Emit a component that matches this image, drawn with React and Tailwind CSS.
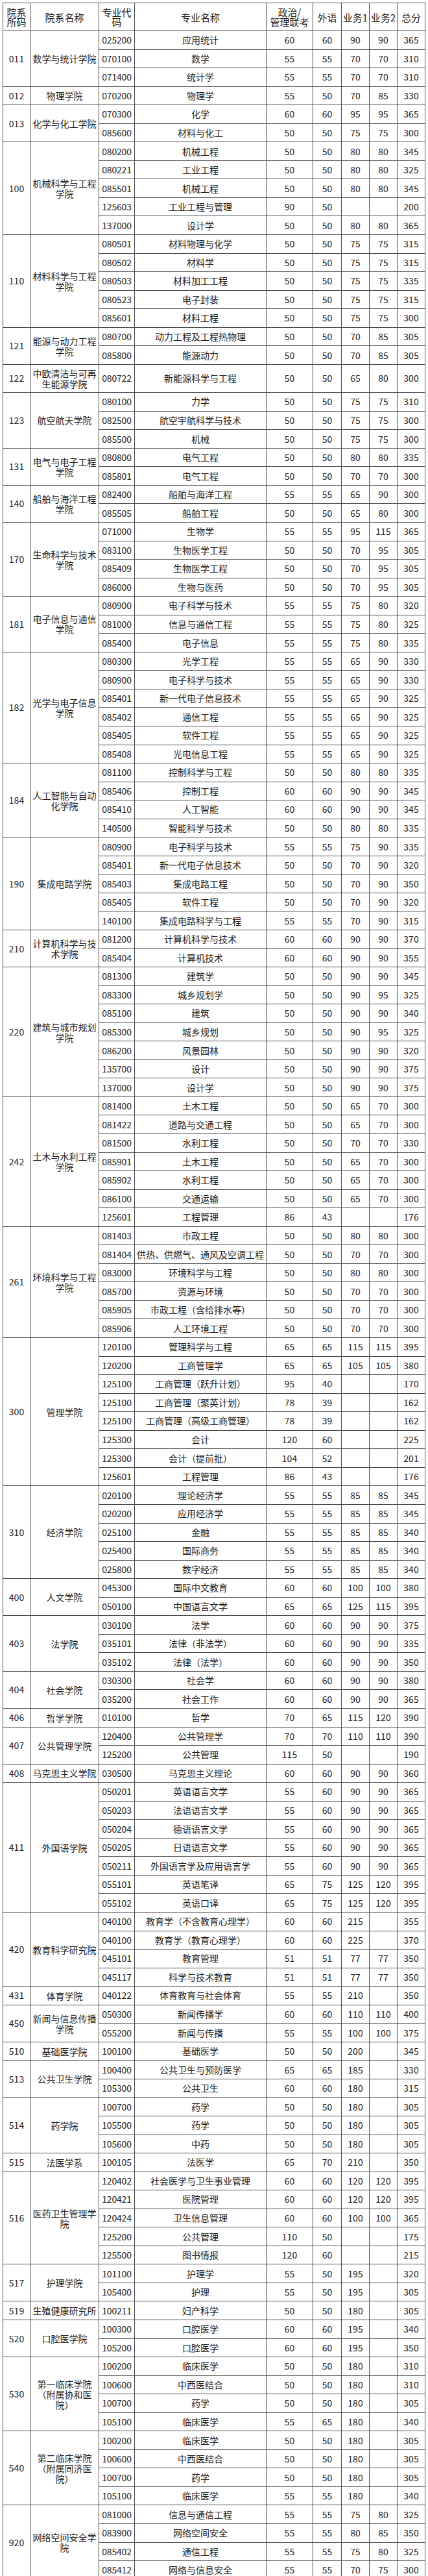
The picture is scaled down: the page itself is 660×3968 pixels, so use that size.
const GROUPS = [
  ['011', '数学与统计学院', [
    '025200|应用统计|60|60|90|90|365',
    '070100|数学|55|55|70|70|310',
    '071400|统计学|55|55|70|70|310',
  ]],
  ['012', '物理学院', [
    '070200|物理学|55|50|70|85|330',
  ]],
  ['013', '化学与化工学院', [
    '070300|化学|60|60|95|95|365',
    '085600|材料与化工|50|50|75|75|300',
  ]],
  ['100', '机械科学与工程学院', [
    '080200|机械工程|50|50|80|80|345',
    '080221|工业工程|50|50|80|80|325',
    '085501|机械工程|50|50|80|80|345',
    '125603|工业工程与管理|90|50|||200',
    '137000|设计学|50|50|80|80|365',
  ]],
  ['110', '材料科学与工程学院', [
    '080501|材料物理与化学|50|50|75|75|315',
    '080502|材料学|50|50|75|75|315',
    '080503|材料加工工程|50|50|75|75|335',
    '080523|电子封装|50|50|75|75|315',
    '085601|材料工程|50|50|75|75|300',
  ]],
  ['121', '能源与动力工程学院', [
    '080700|动力工程及工程热物理|50|50|70|85|305',
    '085800|能源动力|50|50|70|85|305',
  ]],
  ['122', '中欧清洁与可再生能源学院', [
    '080722|新能源科学与工程|50|50|65|80|300',
  ], true],
  ['123', '航空航天学院', [
    '080100|力学|50|50|75|75|310',
    '082500|航空宇航科学与技术|50|50|75|75|300',
    '085500|机械|50|50|75|75|300',
  ]],
  ['131', '电气与电子工程学院', [
    '080800|电气工程|50|50|80|80|335',
    '085801|电气工程|50|50|70|70|300',
  ]],
  ['140', '船舶与海洋工程学院', [
    '082400|船舶与海洋工程|55|55|65|90|300',
    '085505|船舶工程|50|50|65|80|300',
  ]],
  ['170', '生命科学与技术学院', [
    '071000|生物学|55|55|95|115|365',
    '083100|生物医学工程|50|50|70|95|305',
    '085409|生物医学工程|50|50|70|95|305',
    '086000|生物与医药|50|50|70|95|305',
  ]],
  ['181', '电子信息与通信学院', [
    '080900|电子科学与技术|55|55|75|80|320',
    '081000|信息与通信工程|55|55|75|80|325',
    '085400|电子信息|55|55|75|80|335',
  ]],
  ['182', '光学与电子信息学院', [
    '080300|光学工程|55|55|65|90|330',
    '080900|电子科学与技术|55|55|65|90|330',
    '085401|新一代电子信息技术|55|55|65|90|325',
    '085402|通信工程|55|55|65|90|325',
    '085405|软件工程|55|55|65|90|325',
    '085408|光电信息工程|55|55|65|90|325',
  ]],
  ['184', '人工智能与自动化学院', [
    '081100|控制科学与工程|50|50|80|80|335',
    '085406|控制工程|60|60|90|90|345',
    '085410|人工智能|60|60|90|90|345',
    '140500|智能科学与技术|50|50|80|80|335',
  ]],
  ['190', '集成电路学院', [
    '080900|电子科学与技术|55|55|75|90|335',
    '085401|新一代电子信息技术|50|50|70|90|320',
    '085403|集成电路工程|50|50|70|90|350',
    '085405|软件工程|50|50|70|90|320',
    '140100|集成电路科学与工程|55|55|70|90|315',
  ]],
  ['210', '计算机科学与技术学院', [
    '081200|计算机科学与技术|60|60|90|90|370',
    '085404|计算机技术|60|60|90|90|355',
  ]],
  ['220', '建筑与城市规划学院', [
    '081300|建筑学|50|50|90|90|345',
    '083300|城乡规划学|50|50|90|95|325',
    '085100|建筑|50|50|90|90|340',
    '085300|城乡规划|50|50|90|95|325',
    '086200|风景园林|50|50|90|90|320',
    '135700|设计|50|50|90|90|375',
    '137000|设计学|50|50|90|90|375',
  ]],
  ['242', '土木与水利工程学院', [
    '081400|土木工程|50|50|65|70|300',
    '081422|道路与交通工程|50|50|65|70|300',
    '081500|水利工程|50|50|70|70|330',
    '085901|土木工程|50|50|65|70|300',
    '085902|水利工程|50|50|65|70|300',
    '086100|交通运输|50|50|65|70|300',
    '125601|工程管理|86|43|||176',
  ]],
  ['261', '环境科学与工程学院', [
    '081403|市政工程|50|50|80|80|300',
    '081404|供热、供燃气、通风及空调工程|50|50|70|70|300',
    '083000|环境科学与工程|50|50|80|80|300',
    '085700|资源与环境|50|50|70|70|300',
    '085905|市政工程（含给排水等）|50|50|70|70|300',
    '085906|人工环境工程|50|50|70|70|300',
  ]],
  ['300', '管理学院', [
    '120100|管理科学与工程|65|65|115|115|395',
    '120200|工商管理学|65|65|105|105|380',
    '125100|工商管理（跃升计划）|95|40|||170',
    '125100|工商管理（聚英计划）|78|39|||162',
    '125100|工商管理（高级工商管理）|78|39|||162',
    '125300|会计|120|60|||225',
    '125300|会计（提前批）|104|52|||201',
    '125601|工程管理|86|43|||176',
  ]],
  ['310', '经济学院', [
    '020100|理论经济学|55|55|85|85|345',
    '020200|应用经济学|55|55|85|85|345',
    '025100|金融|55|55|85|85|340',
    '025400|国际商务|55|55|85|85|340',
    '025800|数字经济|55|55|85|85|340',
  ]],
  ['400', '人文学院', [
    '045300|国际中文教育|60|60|100|100|380',
    '050100|中国语言文学|65|65|125|115|395',
  ]],
  ['403', '法学院', [
    '030100|法学|60|60|90|90|375',
    '035101|法律（非法学）|60|60|90|90|335',
    '035102|法律（法学）|60|60|90|90|350',
  ]],
  ['404', '社会学院', [
    '030300|社会学|60|60|90|90|380',
    '035200|社会工作|60|60|90|90|365',
  ]],
  ['406', '哲学学院', [
    '010100|哲学|70|65|115|120|390',
  ]],
  ['407', '公共管理学院', [
    '120400|公共管理学|70|70|110|110|390',
    '125200|公共管理|115|50|||190',
  ]],
  ['408', '马克思主义学院', [
    '030500|马克思主义理论|60|60|90|90|360',
  ]],
  ['411', '外国语学院', [
    '050201|英语语言文学|55|60|90|90|365',
    '050203|法语语言文学|55|60|90|90|365',
    '050204|德语语言文学|55|60|90|90|365',
    '050205|日语语言文学|55|60|90|90|365',
    '050211|外国语言学及应用语言学|55|60|90|90|365',
    '055101|英语笔译|65|75|125|120|395',
    '055102|英语口译|65|75|125|120|395',
  ]],
  ['420', '教育科学研究院', [
    '040100|教育学（不含教育心理学）|60|60|215||355',
    '040100|教育学（教育心理学）|60|60|225||370',
    '045101|教育管理|51|51|77|77|350',
    '045117|科学与技术教育|51|51|77|77|350',
  ]],
  ['431', '体育学院', [
    '040122|体育教育与社会体育|55|55|210||350',
  ]],
  ['450', '新闻与信息传播学院', [
    '050300|新闻传播学|60|60|110|110|400',
    '055200|新闻与传播|55|55|100|100|375',
  ]],
  ['510', '基础医学院', [
    '100100|基础医学|50|50|200||345',
  ]],
  ['513', '公共卫生学院', [
    '100400|公共卫生与预防医学|65|65|185||330',
    '105300|公共卫生|60|60|180||315',
  ]],
  ['514', '药学院', [
    '100700|药学|50|50|180||305',
    '105500|药学|50|50|180||305',
    '105600|中药|50|50|180||305',
  ]],
  ['515', '法医学系', [
    '100105|法医学|65|70|210||350',
  ]],
  ['516', '医药卫生管理学院', [
    '120402|社会医学与卫生事业管理|60|60|120|120|395',
    '120421|医院管理|60|60|120|120|395',
    '120424|卫生信息管理|60|60|100|100|365',
    '125200|公共管理|110|50|||175',
    '125500|图书情报|120|60|||215',
  ]],
  ['517', '护理学院', [
    '101100|护理学|55|50|195||320',
    '105400|护理|55|50|195||305',
  ]],
  ['519', '生殖健康研究所', [
    '100211|妇产科学|50|50|180||305',
  ]],
  ['520', '口腔医学院', [
    '100300|口腔医学|60|60|195||340',
    '105200|口腔医学|60|60|195||350',
  ]],
  ['530', '第一临床学院（附属协和医院）', [
    '100200|临床医学|50|50|180||310',
    '100600|中西医结合|50|50|180||310',
    '100700|药学|50|50|180||305',
    '105100|临床医学|55|65|180||340',
  ]],
  ['540', '第二临床学院（附属同济医院）', [
    '100200|临床医学|50|50|180||305',
    '100600|中西医结合|50|50|180||305',
    '100700|药学|50|50|180||305',
    '105100|临床医学|55|55|180||340',
  ]],
  ['920', '网络空间安全学院', [
    '081000|信息与通信工程|55|55|75|80|325',
    '083900|网络空间安全|55|55|80|85|350',
    '085402|通信工程|55|55|75|80|325',
    '085412|网络与信息安全|55|55|70|75|300',
  ]],
]

// widths of the five score columns: 政治, 外语, 业务1, 业务2, 总分
const SCORE_W = ['w-[72px]', 'w-[44px]', 'w-[43px]', 'w-[43px]', 'w-[43px]']

const cell = 'shrink-0 border-r border-[#4a4a4a] flex items-center justify-center text-center'

function Row({ line, tall }) {
  const [code, name, ...scores] = line.split('|')
  return (
    <div className={`flex border-b border-[#4a4a4a] ${tall ? 'h-[43.3px]' : 'h-[28.55px]'}`}>
      <div className={`${cell} w-[55px] tracking-[-0.2px]`}>{code}</div>
      <div className={`${cell} w-[203px] whitespace-nowrap`}>{name}</div>
      {scores.map((s, i) => (
        <div key={i} className={`${cell} ${SCORE_W[i]}`}>{s}</div>
      ))}
    </div>
  )
}

function Group({ code, name, rows, tall }) {
  return (
    <div className="flex">
      <div className={`${cell} w-[42px] border-b`}>{code}</div>
      <div className={`${cell} w-[106px] border-b px-[3px] leading-[16px]`}>{name}</div>
      <div className="flex flex-col">
        {rows.map((r, i) => <Row key={i} line={r} tall={tall} />)}
      </div>
    </div>
  )
}

export default function App() {
  return (
    <div className="bg-white min-h-screen pt-[4px] pl-[4px] text-[#222] text-[14px] font-['Noto_Sans_CJK_SC','Noto_Sans',sans-serif]">
      <div className="w-[653px] border-l border-t border-[#4a4a4a]">
        {/* header */}
        <div className="flex h-[43px] border-b border-[#4a4a4a] text-[15px] leading-[15px]">
          <div className={`${cell} w-[42px]`}>院系<br />所码</div>
          <div className={`${cell} w-[106px]`}>院系名称</div>
          <div className={`${cell} w-[55px]`}>专业代<br />码</div>
          <div className={`${cell} w-[203px]`}>专业名称</div>
          <div className={`${cell} w-[72px]`}>政治/<br />管理联考</div>
          <div className={`${cell} w-[44px]`}>外语</div>
          <div className={`${cell} w-[43px]`}>业务1</div>
          <div className={`${cell} w-[43px]`}>业务2</div>
          <div className={`${cell} w-[43px]`}>总分</div>
        </div>

        {GROUPS.map(([code, name, rows, tall]) => (
          <Group key={code} code={code} name={name} rows={rows} tall={tall} />
        ))}
      </div>
    </div>
  )
}
